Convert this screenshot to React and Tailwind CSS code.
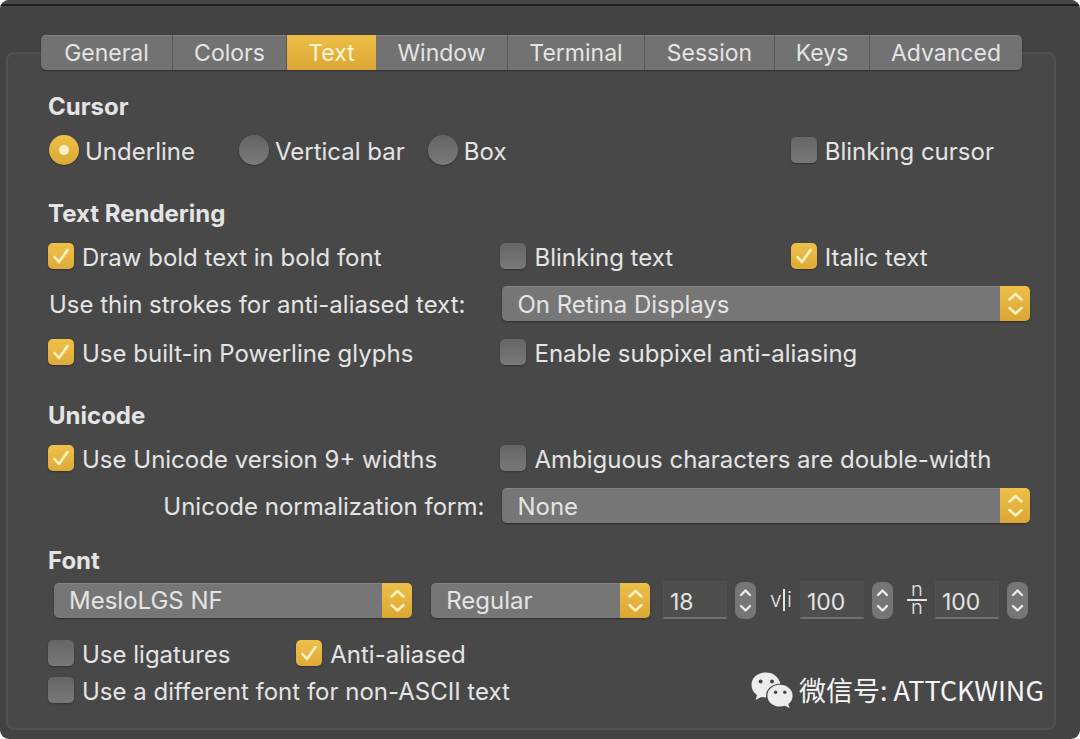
import { useId } from "react";

const TABS = ["General", "Colors", "Text", "Window", "Terminal", "Session", "Keys", "Advanced"];

function Heading({ children }) {
  return <h2 className="h-[30px] text-[24px] leading-[30px] font-bold">{children}</h2>;
}

function Check({ label, checked = false }) {
  const id = useId();
  return (
    <div className="flex h-9 min-w-0 items-center gap-2">
      <span className="grid size-[26px] shrink-0">
        <input
          id={id}
          type="checkbox"
          defaultChecked={checked}
          className="peer col-start-1 row-start-1 size-[26px] appearance-none rounded-[5px] bg-linear-to-b from-[#666666] to-[#787878] shadow-[0_1px_2px_rgba(0,0,0,0.3)] checked:from-[#f0c04a] checked:to-[#dfaa38]"
        />
        <svg
          viewBox="0 0 26 26"
          className="pointer-events-none invisible col-start-1 row-start-1 size-[26px] peer-checked:visible"
          fill="none"
          stroke="#fff3c4"
          strokeWidth="2.6"
          strokeLinecap="round"
          strokeLinejoin="round"
        >
          <path d="M6.5 14 L11 19 L19.5 7" />
        </svg>
      </span>
      <label htmlFor={id} className="pt-1 whitespace-nowrap">{label}</label>
    </div>
  );
}

function Radio({ label, checked = false }) {
  const id = useId();
  return (
    <div className="flex h-9 min-w-0 items-center gap-[6px]">
      <span className="grid size-[30px] shrink-0">
        <input
          id={id}
          type="radio"
          name="cursor"
          defaultChecked={checked}
          className="peer col-start-1 row-start-1 size-[30px] appearance-none rounded-full bg-linear-to-b from-[#646464] to-[#7a7a7a] shadow-[0_1px_2px_rgba(0,0,0,0.3)] checked:from-[#f0c04a] checked:to-[#dba634]"
        />
        <span className="pointer-events-none invisible col-start-1 row-start-1 size-[10px] place-self-center rounded-full bg-[#fff3c4] peer-checked:visible" />
      </span>
      <label htmlFor={id} className="pt-1 whitespace-nowrap">{label}</label>
    </div>
  );
}

function Select({ id, label, value }) {
  return (
    <div className="grid h-[35px] min-w-0 overflow-hidden rounded-[5px] bg-[#767676] shadow-[0_1px_2px_rgba(0,0,0,0.35),inset_0_1px_0_rgba(255,255,255,0.1)]">
      <select
        id={id}
        aria-label={label}
        defaultValue={value}
        className="col-start-1 row-start-1 h-[35px] w-full min-w-0 appearance-none pt-[2px] pr-8 pl-[15px]"
      >
        <option>{value}</option>
      </select>
      <span className="pointer-events-none col-start-1 row-start-1 flex h-[35px] w-[30px] items-center justify-center justify-self-end bg-linear-to-b from-[#efbf49] to-[#dba634]">
        <svg
          viewBox="0 0 30 35"
          className="h-[35px] w-[30px]"
          fill="none"
          stroke="#fff3c4"
          strokeWidth="2.4"
          strokeLinecap="round"
          strokeLinejoin="round"
        >
          <path d="M9.5 13.5 L15.5 8 L21.5 13.5 M9.5 22 L15.5 27.5 L21.5 22" />
        </svg>
      </span>
    </div>
  );
}

function NumberField({ label, value }) {
  return (
    <div className="flex items-center gap-2">
      <input
        type="text"
        inputMode="numeric"
        aria-label={label}
        defaultValue={value}
        className="h-[38px] w-16 border border-b-2 border-[#505050] border-b-[#707070] bg-[#4e4e4e] pt-1 pl-[6px] text-[23px]"
      />
      <span className="flex h-[37px] w-[21px] flex-col overflow-hidden rounded-[8px] bg-[#767676]">
        <button type="button" aria-label={"Increase " + label} className="flex flex-1 items-center justify-center">
          <svg viewBox="0 0 21 18" className="h-[18px] w-[21px]" fill="none" stroke="#ececec" strokeWidth="2.4" strokeLinecap="round" strokeLinejoin="round">
            <path d="M6 13 L10.5 8.5 L15 13" />
          </svg>
        </button>
        <button type="button" aria-label={"Decrease " + label} className="flex flex-1 items-center justify-center">
          <svg viewBox="0 0 21 18" className="h-[18px] w-[21px]" fill="none" stroke="#ececec" strokeWidth="2.4" strokeLinecap="round" strokeLinejoin="round">
            <path d="M6 6 L10.5 10.5 L15 6" />
          </svg>
        </button>
      </span>
    </div>
  );
}

const GRID = "grid grid-cols-[452fr_290fr_239fr] items-center";

export default function App() {
  return (
    <div className="min-h-screen bg-white font-['Inter',sans-serif] text-[24px] leading-[30px] text-[#e4e4e4]">
      <main className="relative flex min-h-screen flex-col overflow-hidden rounded-[9px] bg-[#434343]">
        <div className="h-[6px] border-b-2 border-[#1f1f1f] bg-[#464646]" />

        <div role="tablist" className="z-10 mt-[29px] mr-[58px] ml-[41px] grid h-[35px] grid-cols-[132fr_114fr_89fr_132fr_137fr_130fr_95fr_152fr] overflow-hidden rounded-[5px] bg-[#727272] text-[23px] shadow-[0_1px_2px_rgba(0,0,0,0.35),inset_0_1px_0_rgba(255,255,255,0.12)]">
          {TABS.map((tab) => (
            <button
              key={tab}
              type="button"
              role="tab"
              aria-selected={tab === "Text"}
              className={
                tab === "Text"
                  ? "bg-linear-to-b from-[#efbf45] to-[#dba634] text-[#fff6dc]"
                  : "border-r border-[#595959] last:border-r-0"
              }
            >
              {tab}
            </button>
          ))}
        </div>

        <div role="tabpanel" className="mr-6 mb-[9px] ml-[6px] -mt-[18px] flex-1 rounded-[8px] border-2 border-[#525252] bg-[#484848] pt-[38px] pr-6 pb-2 pl-10">
          <section>
            <Heading>Cursor</Heading>
            <div className={GRID + " mt-[10px]"}>
              <div className="col-span-2 grid grid-cols-[190fr_189fr_363fr] pl-px">
                <Radio label="Underline" checked />
                <Radio label="Vertical bar" />
                <Radio label="Box" />
              </div>
              <Check label="Blinking cursor" />
            </div>
          </section>

          <section className="mt-[31px]">
            <Heading>Text Rendering</Heading>
            <div className={GRID + " mt-[9px]"}>
              <Check label="Draw bold text in bold font" checked />
              <Check label="Blinking text" />
              <Check label="Italic text" checked />
            </div>
            <div className={GRID + " mt-[12px]"}>
              <label htmlFor="strokes" className="pt-[2px] pl-px whitespace-nowrap">Use thin strokes for anti-aliased text:</label>
              <div className="col-span-2 pl-[2px]">
                <Select id="strokes" value="On Retina Displays" />
              </div>
            </div>
            <div className={GRID + " mt-[13px]"}>
              <Check label="Use built-in Powerline glyphs" checked />
              <div className="col-span-2">
                <Check label="Enable subpixel anti-aliasing" />
              </div>
            </div>
          </section>

          <section className="mt-[31px]">
            <Heading>Unicode</Heading>
            <div className={GRID + " mt-[9px]"}>
              <Check label="Use Unicode version 9+ widths" checked />
              <div className="col-span-2">
                <Check label="Ambiguous characters are double-width" />
              </div>
            </div>
            <div className={GRID + " mt-[12px]"}>
              <label htmlFor="normalization" className="pt-[2px] pr-4 text-right whitespace-nowrap">Unicode normalization form:</label>
              <div className="col-span-2 pl-[2px]">
                <Select id="normalization" value="None" />
              </div>
            </div>
          </section>

          <section className="mt-[23px]">
            <Heading>Font</Heading>
            <div className="mt-[5px] flex items-center pr-[2px] pl-[6px]">
              <div className="mr-[19px] min-w-0 flex-[357]">
                <Select id="font-family" label="Font family" value="MesloLGS NF" />
              </div>
              <div className="mr-[13px] min-w-0 flex-[218]">
                <Select id="font-style" label="Font style" value="Regular" />
              </div>
              <NumberField label="font size" value="18" />
              <span className="mr-2 ml-[14px] flex w-[22px] items-center justify-between text-[21px] leading-6 font-light">
                <span>v</span>
                <span className="h-[22px] w-[2px] shrink-0 bg-[#e4e4e4]" />
                <span>i</span>
              </span>
              <NumberField label="horizontal spacing" value="100" />
              <span className="mr-2 ml-[14px] flex w-5 flex-col items-center pb-[5px] text-[20px] font-light">
                <span className="pb-[2px] leading-[15px]">n</span>
                <span className="h-[2px] w-5 bg-[#e4e4e4]" />
                <span className="leading-3">n</span>
              </span>
              <NumberField label="vertical spacing" value="100" />
            </div>
            <div className="mt-[16px] grid grid-cols-[248fr_733fr]">
              <Check label="Use ligatures" />
              <Check label="Anti-aliased" checked />
            </div>
            <div className="mt-px">
              <Check label="Use a different font for non-ASCII text" />
            </div>
          </section>
        </div>

        <div className="absolute right-9 bottom-[31px] flex items-center gap-[6px] font-['Noto_Sans_CJK_SC',sans-serif] text-[27px] leading-9 text-[#f4f4f4]">
          <svg viewBox="0 0 42 36" className="h-9 w-[42px]" fill="#ececec">
            <path d="M15 0.5 C6.8 0.5 0.5 6 0.5 13 C0.5 17.2 2.6 20.6 6 22.9 L4.6 28 L10.2 24.9 C11.8 25.4 13.5 25.6 15.2 25.6 C14 17.5 20.5 11.5 29.3 11.7 C28 5.2 22.2 0.5 15 0.5 Z" />
            <path d="M29 12.8 C22 12.8 16.4 17.6 16.4 23.7 C16.4 29.9 22 34.6 29 34.6 C30.7 34.6 32.3 34.3 33.8 33.8 L38.6 36 L37.3 32 C40 30 41.6 27.2 41.6 23.7 C41.6 17.6 36 12.8 29 12.8 Z" />
            <g fill="#484848">
              <circle cx="9.6" cy="9.5" r="2" />
              <circle cx="21" cy="9.5" r="2" />
              <circle cx="24.6" cy="20.3" r="1.7" />
              <circle cx="33.8" cy="20.3" r="1.7" />
            </g>
          </svg>
          <span>微信号: ATTCKWING</span>
        </div>
      </main>
    </div>
  );
}
